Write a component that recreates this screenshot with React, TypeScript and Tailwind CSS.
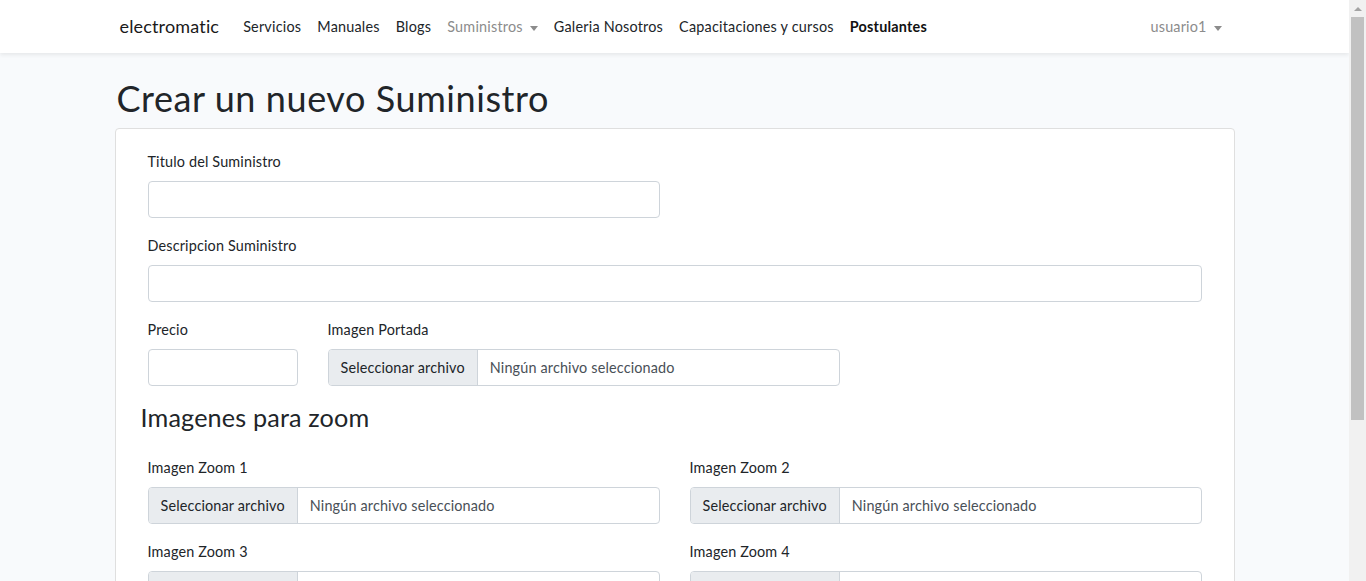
import React from 'react';

const font = "font-['Lato','Noto_Sans',sans-serif] tracking-[0.01em]";

const Caret = () => (
  <span className="ml-[7px] inline-block h-0 w-0 border-x-[4.5px] border-t-[5px] border-x-transparent border-t-current align-middle" />
);

const navLinks = [
  { label: 'Servicios', cls: 'text-[#212529]' },
  { label: 'Manuales', cls: 'text-[#212529]' },
  { label: 'Blogs', cls: 'text-[#212529]' },
  { label: 'Suministros', cls: 'text-[#8c8c8c]', caret: true },
  { label: 'Galeria Nosotros', cls: 'text-[#212529]' },
  { label: 'Capacitaciones y cursos', cls: 'text-[#212529]' },
  { label: 'Postulantes', cls: 'text-[#111] font-bold' },
];

const Label: React.FC<{ children: React.ReactNode }> = ({ children }) => (
  <label className="mb-2 block h-[23px] leading-[23px] text-[14.4px] text-[#212529]">{children}</label>
);

const TextInput: React.FC<{ className?: string }> = ({ className = '' }) => (
  <div className={`h-[37px] rounded border border-[#ced4da] bg-white ${className}`} />
);

const FileInput: React.FC<{ className?: string }> = ({ className = '' }) => (
  <div className={`flex h-[37px] items-stretch overflow-hidden rounded border border-[#ced4da] bg-white text-[14.4px] text-[#495057] ${className}`}>
    <span className="flex items-center border-r border-[#ced4da] bg-[#e9ecef] px-3 text-[#212529]">Seleccionar archivo</span>
    <span className="flex items-center px-3">Ningún archivo seleccionado</span>
  </div>
);

const App: React.FC = () => {
  return (
    <div className={`flex h-[581px] w-[1366px] overflow-hidden ${font}`}>
      <div className="flex-1 overflow-hidden bg-[#f8fafc]">
        {/* Navbar */}
        <nav className="h-[53px] bg-white shadow-[0_2px_4px_rgba(0,0,0,0.075)]">
          <div className="mx-auto flex h-full w-[1140px] items-center px-[15px]">
            <span className="mr-4 text-[18px] text-[#1a1a1a]">electromatic</span>
            <ul className="flex items-center text-[14.4px] tracking-[0.015em]">
              {navLinks.map((l) => (
                <li key={l.label} className={`px-2 ${l.cls}`}>
                  {l.label}
                  {l.caret && <Caret />}
                </li>
              ))}
            </ul>
            <div className="ml-auto px-2 text-[14.4px] text-[#8c8c8c]">
              usuario1
              <Caret />
            </div>
          </div>
        </nav>

        <main className="pt-6">
          <div className="mx-auto w-[1120px]">
            <h1 className="mb-2 ml-[2px] h-[43px] text-[36px] leading-[43px] font-normal tracking-[0.016em] text-[#212529]">Crear un nuevo Suministro</h1>

            <div className="rounded border border-[#dfdfdf] bg-white px-[32px] pt-[21px] pb-10">
              <div className="mb-4">
                <Label>Titulo del Suministro</Label>
                <TextInput className="w-[512px]" />
              </div>
              <div className="mb-4">
                <Label>Descripcion Suministro</Label>
                <TextInput />
              </div>
              <div className="mb-4 flex gap-[30px]">
                <div className="w-[150px]">
                  <Label>Precio</Label>
                  <TextInput />
                </div>
                <div className="w-[512px]">
                  <Label>Imagen Portada</Label>
                  <FileInput />
                </div>
              </div>

              <h3 className="-ml-[7px] mb-[24px] h-[30px] text-[25.2px] leading-[30px] font-normal text-[#212529]">Imagenes para zoom</h3>

              <div className="grid grid-cols-2 gap-x-[30px]">
                {[1, 2, 3, 4].map((n) => (
                  <div key={n} className="mb-4">
                    <Label>Imagen Zoom {n}</Label>
                    <FileInput />
                  </div>
                ))}
              </div>
            </div>
          </div>
        </main>
      </div>

      {/* Scrollbar */}
      <div className="flex w-[17px] flex-col bg-[#f1f1f1]">
        <div className="flex h-[17px] items-center justify-center">
          <span className="h-0 w-0 border-x-[4px] border-b-[4px] border-x-transparent border-b-[#a3a3a3]" />
        </div>
        <div className="mx-[2px] h-[403px] bg-[#c1c1c1]" />
      </div>
    </div>
  );
};

export default App;
